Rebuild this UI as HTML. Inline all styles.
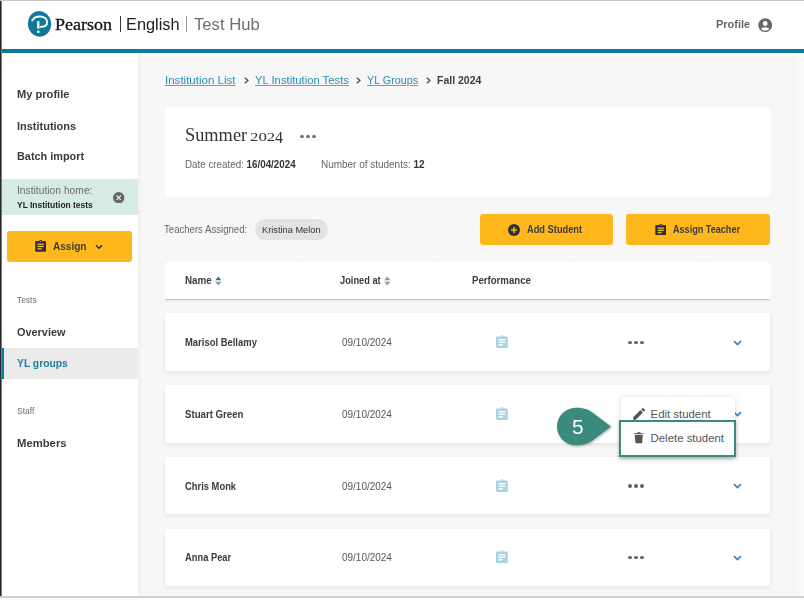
<!DOCTYPE html>
<html><head><meta charset="utf-8"><title>Test Hub</title>
<style>
html,body{margin:0;padding:0;width:804px;height:600px;overflow:hidden;background:#f7f7f7}
body{position:relative;font-family:"Liberation Sans", sans-serif}
.t{position:absolute;white-space:nowrap;font-family:"Liberation Sans", sans-serif}
.r{position:absolute}
</style></head><body>
<div class="r" style="left:0px;top:0px;width:804px;height:600px;background:#f7f7f7"></div>
<div class="r" style="left:0px;top:0px;width:804px;height:49px;background:#fff"></div>
<div class="r" style="left:0px;top:49px;width:804px;height:3.5px;background:#0a7b9c"></div>
<div class="r" style="left:0px;top:52.5px;width:804px;height:1.5px;background:#fff"></div>
<div class="r" style="left:0px;top:54px;width:138px;height:546px;background:#fff"></div>
<div class="r" style="left:138px;top:54px;width:5px;height:546px;background:linear-gradient(to right,#efefef,#f7f7f7)"></div>
<div class="r" style="left:796px;top:54px;width:8px;height:546px;background:#f9f9f9"></div>
<svg class="r" style="left:27px;top:11px" width="26" height="27" viewBox="0 0 26 27"><ellipse cx="12.5" cy="12.9" rx="11.6" ry="12.8" fill="#0e7899" transform="rotate(-8 12.5 12.9)"/><path d="M5.2 9.4 C6.8 6.6 9.6 5.5 12.8 5.5 C17.2 5.5 20.1 7.9 20.1 11 C20.1 14 17.6 15.9 13.6 15.9" fill="none" stroke="#fff" stroke-width="1.9" stroke-linecap="round"/><path d="M11.3 10.2 V17.6" stroke="#fff" stroke-width="2.3"/><rect x="10.1" y="19.6" width="2.4" height="2.3" rx="0.6" fill="#fff"/></svg>
<div class="t" style="left:54.91px;top:16.00px;font-size:17.5px;line-height:17.5px;color:#111;font-weight:400;font-family:'Liberation Serif', serif;transform:scaleX(1.0297);transform-origin:0 0;-webkit-text-stroke:0.3px #111;">Pearson</div>
<div class="r" style="left:119.7px;top:16.3px;width:1.2000000000000028px;height:15.3px;background:#3a3a3a"></div>
<div class="t" style="left:126.06px;top:16.00px;font-size:17.0px;line-height:17.0px;color:#222;font-weight:400;transform:scaleX(0.9620);transform-origin:0 0;">English</div>
<div class="r" style="left:185.8px;top:16.3px;width:1.1999999999999886px;height:15.3px;background:#9a9a9a"></div>
<div class="t" style="left:194.18px;top:16.00px;font-size:17.0px;line-height:17.0px;color:#6e6e6e;font-weight:400;transform:scaleX(0.9786);transform-origin:0 0;">Test Hub</div>
<div class="t" style="left:716.04px;top:19.00px;font-size:11.4px;line-height:11.4px;color:#666;font-weight:700;transform:scaleX(0.9607);transform-origin:0 0;">Profile</div>
<svg class="r" style="left:756.6px;top:16.6px" width="16.4" height="16.4" viewBox="0 0 24 24"><path fill="#666" d="M12 2C6.48 2 2 6.48 2 12s4.48 10 10 10 10-4.48 10-10S17.52 2 12 2zm0 4c1.93 0 3.5 1.57 3.5 3.5S13.93 13 12 13s-3.5-1.570-3.5-3.5S10.07 6 12 6zm0 14c-2.03 0-4.43-.82-6.14-2.88C7.55 15.8 9.680 15 12 15s4.45.8 6.14 2.12C16.43 19.18 14.03 20 12 20z"/></svg>
<div class="t" style="left:16.94px;top:88.00px;font-size:11.6px;line-height:11.6px;color:#3b3b3b;font-weight:700;transform:scaleX(0.9577);transform-origin:0 0;">My profile</div>
<div class="t" style="left:16.94px;top:120.00px;font-size:11.6px;line-height:11.6px;color:#3b3b3b;font-weight:700;transform:scaleX(0.9454);transform-origin:0 0;">Institutions</div>
<div class="t" style="left:16.94px;top:150.00px;font-size:11.6px;line-height:11.6px;color:#3b3b3b;font-weight:700;transform:scaleX(0.9375);transform-origin:0 0;">Batch import</div>
<div class="r" style="left:2px;top:179px;width:136px;height:36px;background:#d6ebe6"></div>
<div class="t" style="left:16.56px;top:186.00px;font-size:10.2px;line-height:10.2px;color:#6b6b6b;font-weight:400;transform:scaleX(1.0098);transform-origin:0 0;">Institution home:</div>
<div class="t" style="left:16.91px;top:201.00px;font-size:8.6px;line-height:8.6px;color:#222;font-weight:700;transform:scaleX(0.9814);transform-origin:0 0;">YL Institution tests</div>
<svg class="r" style="left:113.2px;top:191.6px" width="11.4" height="11.4" viewBox="0 0 24 24"><circle cx="12" cy="12" r="12" fill="#666"/><path d="M7.5 7.5L16.5 16.5M16.5 7.5L7.5 16.5" stroke="#e8e8e8" stroke-width="2.6"/></svg>
<div class="r" style="left:7.3px;top:231px;width:124.7px;height:30.5px;background:#ffb81c;border-radius:3px"></div>
<svg class="r" style="left:34.8px;top:240.2px" width="11.3" height="11.8" viewBox="0 0 12 13"><path fill="#2f2f3a" d="M1.1 1.2H4.3C4.5 0.5 5.2 0 6 0S7.5 0.5 7.7 1.2H10.9C11.5 1.2 12 1.7 12 2.3V11.9C12 12.5 11.5 13 10.9 13H1.1C0.5 13 0 12.5 0 11.9V2.3C0 1.7 0.5 1.2 1.1 1.2Z"/><rect x="2.5" y="3.9" width="7" height="1.4" fill="#ffb81c"/><rect x="2.5" y="6.4" width="7" height="1.4" fill="#ffb81c"/><rect x="2.5" y="9.0" width="4.6" height="1.4" fill="#ffb81c"/><circle cx="6" cy="1.4" r="0.65" fill="#ffb81c"/></svg>
<div class="t" style="left:53.10px;top:240.00px;font-size:11.6px;line-height:11.6px;color:#3b3b3b;font-weight:700;transform:scaleX(0.8667);transform-origin:0 0;">Assign</div>
<svg class="r" style="left:95px;top:243.5px" width="8" height="6" viewBox="0 0 8 6"><path d="M1 1.2L4 4.2L7 1.2" fill="none" stroke="#333" stroke-width="1.6"/></svg>
<div class="t" style="left:16.98px;top:296.00px;font-size:8.6px;line-height:8.6px;color:#6b6b6b;font-weight:400;transform:scaleX(0.9778);transform-origin:0 0;">Tests</div>
<div class="t" style="left:16.87px;top:326.00px;font-size:11.6px;line-height:11.6px;color:#3b3b3b;font-weight:700;transform:scaleX(0.9397);transform-origin:0 0;">Overview</div>
<div class="r" style="left:2px;top:348px;width:136px;height:31px;background:#ebebeb"></div>
<div class="r" style="left:2px;top:348px;width:2px;height:31px;background:#0a7b9c"></div>
<div class="t" style="left:16.87px;top:357.00px;font-size:11.6px;line-height:11.6px;color:#237d9e;font-weight:700;transform:scaleX(0.8902);transform-origin:0 0;">YL groups</div>
<div class="t" style="left:16.73px;top:407.00px;font-size:8.6px;line-height:8.6px;color:#6b6b6b;font-weight:400;transform:scaleX(0.9944);transform-origin:0 0;">Staff</div>
<div class="t" style="left:16.64px;top:437.00px;font-size:11.6px;line-height:11.6px;color:#3b3b3b;font-weight:700;transform:scaleX(0.9735);transform-origin:0 0;">Members</div>
<div class="t" style="left:165.39px;top:74.00px;font-size:11.6px;line-height:11.6px;color:#2b8db3;font-weight:400;transform:scaleX(0.9945);transform-origin:0 0;text-decoration:underline;text-underline-offset:0.5px;text-decoration-color:#5aa8c6;">Institution List</div>
<svg class="r" style="left:243.9px;top:76.5px" width="5" height="7" viewBox="0 0 5 7"><path d="M0.9 0.7L3.9 3.5L0.9 6.3" fill="none" stroke="#505050" stroke-width="1.3"/></svg>
<div class="t" style="left:255.00px;top:74.00px;font-size:11.6px;line-height:11.6px;color:#2b8db3;font-weight:400;transform:scaleX(0.9715);transform-origin:0 0;text-decoration:underline;text-underline-offset:0.5px;text-decoration-color:#5aa8c6;">YL Institution Tests</div>
<svg class="r" style="left:356.4px;top:76.5px" width="5" height="7" viewBox="0 0 5 7"><path d="M0.9 0.7L3.9 3.5L0.9 6.3" fill="none" stroke="#505050" stroke-width="1.3"/></svg>
<div class="t" style="left:367.00px;top:74.00px;font-size:11.6px;line-height:11.6px;color:#2b8db3;font-weight:400;transform:scaleX(0.9316);transform-origin:0 0;text-decoration:underline;text-underline-offset:0.5px;text-decoration-color:#5aa8c6;">YL Groups</div>
<svg class="r" style="left:425.7px;top:76.5px" width="5" height="7" viewBox="0 0 5 7"><path d="M0.9 0.7L3.9 3.5L0.9 6.3" fill="none" stroke="#505050" stroke-width="1.3"/></svg>
<div class="t" style="left:436.54px;top:74.00px;font-size:11.6px;line-height:11.6px;color:#3b3b3b;font-weight:700;transform:scaleX(0.9059);transform-origin:0 0;">Fall 2024</div>
<div class="r" style="left:165px;top:107px;width:605px;height:90px;background:#fff;border-radius:3px"></div>
<div class="t" style="left:184.88px;top:126.00px;font-size:18.2px;line-height:18.2px;color:#333;font-weight:400;font-family:'Liberation Serif', serif;transform:scaleX(1.0080);transform-origin:0 0;">Summer</div>
<div class="t" style="left:250.27px;top:130.00px;font-size:13.4px;line-height:13.4px;color:#333;font-weight:400;font-family:'Liberation Serif', serif;transform:scaleX(1.2589);transform-origin:0 0;">202</div>
<div class="t" style="left:275.12px;top:130.00px;font-size:16.5px;line-height:16.5px;color:#333;font-weight:400;font-family:'Liberation Serif', serif;transform:scaleX(0.9649);transform-origin:0 0;">4</div>
<div class="r" style="left:300.1px;top:134.5px;width:3.5px;height:3.5px;background:#727272;border-radius:50%"></div>
<div class="r" style="left:306.15000000000003px;top:134.5px;width:3.5px;height:3.5px;background:#727272;border-radius:50%"></div>
<div class="r" style="left:312.20000000000005px;top:134.5px;width:3.5px;height:3.5px;background:#727272;border-radius:50%"></div>
<div class="t" style="left:185.12px;top:160.00px;font-size:10.0px;line-height:10.0px;color:#666;font-weight:400;transform:scaleX(0.9803);transform-origin:0 0;">Date created: <b style="color:#333">16/04/2024</b></div>
<div class="t" style="left:321.32px;top:160.00px;font-size:10.0px;line-height:10.0px;color:#666;font-weight:400;transform:scaleX(0.9959);transform-origin:0 0;">Number of students: <b style="color:#333">12</b></div>
<div class="t" style="left:164.44px;top:225.00px;font-size:10.4px;line-height:10.4px;color:#666;font-weight:400;transform:scaleX(0.9229);transform-origin:0 0;">Teachers Assigned:</div>
<div class="r" style="left:254.5px;top:219.4px;width:73.5px;height:20.799999999999983px;background:#e3e3e3;border-radius:11px"></div>
<div class="t" style="left:261.77px;top:225.00px;font-size:9.6px;line-height:9.6px;color:#333;font-weight:400;transform:scaleX(0.9642);transform-origin:0 0;">Kristina Melon</div>
<div class="r" style="left:480px;top:214.2px;width:132.70000000000005px;height:30.600000000000023px;background:#ffb81c;border-radius:3px"></div>
<svg class="r" style="left:508.2px;top:223.7px" width="12" height="12" viewBox="0 0 12 12"><circle cx="6" cy="6" r="6" fill="#2f2f3a"/><path d="M6 3V9M3 6H9" stroke="#ffb81c" stroke-width="1.5"/></svg>
<div class="t" style="left:527.25px;top:225.00px;font-size:10.2px;line-height:10.2px;color:#3b3b3b;font-weight:700;transform:scaleX(0.9104);transform-origin:0 0;">Add Student</div>
<div class="r" style="left:626px;top:214.2px;width:144px;height:30.600000000000023px;background:#ffb81c;border-radius:3px"></div>
<svg class="r" style="left:654.8px;top:223.5px" width="11.4" height="11.7" viewBox="0 0 12 13"><path fill="#2f2f3a" d="M1.1 1.2H4.3C4.5 0.5 5.2 0 6 0S7.5 0.5 7.7 1.2H10.9C11.5 1.2 12 1.7 12 2.3V11.9C12 12.5 11.5 13 10.9 13H1.1C0.5 13 0 12.5 0 11.9V2.3C0 1.7 0.5 1.2 1.1 1.2Z"/><rect x="2.5" y="3.9" width="7" height="1.4" fill="#ffb81c"/><rect x="2.5" y="6.4" width="7" height="1.4" fill="#ffb81c"/><rect x="2.5" y="9.0" width="4.6" height="1.4" fill="#ffb81c"/><circle cx="6" cy="1.4" r="0.65" fill="#ffb81c"/></svg>
<div class="t" style="left:672.85px;top:225.00px;font-size:10.2px;line-height:10.2px;color:#3b3b3b;font-weight:700;transform:scaleX(0.8921);transform-origin:0 0;">Assign Teacher</div>
<div class="r" style="left:165px;top:262px;width:135px;height:38.30000000000001px;background:#fff;border-radius:3px 3px 0 0"></div>
<div class="r" style="left:300px;top:262px;width:134.5px;height:38.30000000000001px;background:#fff;border-radius:3px 3px 0 0"></div>
<div class="r" style="left:434.5px;top:262px;width:134.5px;height:38.30000000000001px;background:#fff;border-radius:3px 3px 0 0"></div>
<div class="r" style="left:569px;top:262px;width:135px;height:38.30000000000001px;background:#fff;border-radius:3px 3px 0 0"></div>
<div class="r" style="left:704px;top:262px;width:66px;height:38.30000000000001px;background:#fff;border-radius:3px 3px 0 0"></div>
<div class="r" style="left:165px;top:299px;width:605px;height:1.3999999999999773px;background:#c6c6c6"></div>
<div class="r" style="left:165px;top:300.4px;width:605px;height:2.6000000000000227px;background:linear-gradient(#ececee,#f6f6f7)"></div>
<div class="t" style="left:184.52px;top:276.00px;font-size:10.0px;line-height:10.0px;color:#3b3b3b;font-weight:700;transform:scaleX(0.9796);transform-origin:0 0;">Name</div>
<svg class="r" style="left:214.6px;top:275.6px" width="6.6" height="10" viewBox="0 0 6.6 10"><path d="M0.2 4.2L3.3 0.5L6.4 4.2Z" fill="#1f7c9c"/><path d="M0.2 5.8L3.3 9.5L6.4 5.8Z" fill="#9a9a9a"/></svg>
<div class="t" style="left:340.08px;top:276.00px;font-size:10.0px;line-height:10.0px;color:#3b3b3b;font-weight:700;transform:scaleX(0.9261);transform-origin:0 0;">Joined at</div>
<svg class="r" style="left:383.6px;top:275.6px" width="6.6" height="10" viewBox="0 0 6.6 10"><path d="M0.2 4.2L3.3 0.5L6.4 4.2Z" fill="#9a9a9a"/><path d="M0.2 5.8L3.3 9.5L6.4 5.8Z" fill="#9a9a9a"/></svg>
<div class="t" style="left:472.12px;top:276.00px;font-size:10.0px;line-height:10.0px;color:#3b3b3b;font-weight:700;transform:scaleX(0.9628);transform-origin:0 0;">Performance</div>
<div class="r" style="left:165px;top:313.3px;width:605px;height:57.80000000000001px;background:#fff;border-radius:3px;box-shadow:0 2px 5px rgba(20,20,60,0.08)"></div>
<div class="t" style="left:184.52px;top:338.00px;font-size:10.0px;line-height:10.0px;color:#3b3b3b;font-weight:700;transform:scaleX(0.9441);transform-origin:0 0;">Marisol Bellamy</div>
<div class="t" style="left:341.59px;top:338.00px;font-size:10.0px;line-height:10.0px;color:#555;font-weight:400;transform:scaleX(0.9961);transform-origin:0 0;">09/10/2024</div>
<svg class="r" style="left:495.9px;top:335.1px" width="11.8" height="13.2" viewBox="0 0 12 13"><path fill="#a9d3e3" d="M1.1 1.2H4.3C4.5 0.5 5.2 0 6 0S7.5 0.5 7.7 1.2H10.9C11.5 1.2 12 1.7 12 2.3V11.9C12 12.5 11.5 13 10.9 13H1.1C0.5 13 0 12.5 0 11.9V2.3C0 1.7 0.5 1.2 1.1 1.2Z"/><rect x="2.5" y="3.9" width="7" height="1.4" fill="#fff"/><rect x="2.5" y="6.4" width="7" height="1.4" fill="#fff"/><rect x="2.5" y="9.0" width="4.6" height="1.4" fill="#fff"/><circle cx="6" cy="1.4" r="0.65" fill="#fff"/></svg>
<div class="r" style="left:628.1px;top:340.5px;width:3.7999999999999545px;height:3.8000000000000114px;background:#646464;border-radius:50%"></div>
<div class="r" style="left:634.2px;top:340.5px;width:3.7999999999999545px;height:3.8000000000000114px;background:#646464;border-radius:50%"></div>
<div class="r" style="left:640.3000000000001px;top:340.5px;width:3.7999999999999545px;height:3.8000000000000114px;background:#646464;border-radius:50%"></div>
<svg class="r" style="left:732.5px;top:339.6px" width="9" height="6" viewBox="0 0 9 6"><path d="M1 1.2L4.5 4.6L8 1.2" fill="none" stroke="#2b8db3" stroke-width="1.7"/></svg>
<div class="r" style="left:165px;top:385.0px;width:605px;height:57.80000000000001px;background:#fff;border-radius:3px;box-shadow:0 2px 5px rgba(20,20,60,0.08)"></div>
<div class="t" style="left:184.70px;top:410.00px;font-size:10.0px;line-height:10.0px;color:#3b3b3b;font-weight:700;transform:scaleX(0.9638);transform-origin:0 0;">Stuart Green</div>
<div class="t" style="left:341.59px;top:410.00px;font-size:10.0px;line-height:10.0px;color:#555;font-weight:400;transform:scaleX(0.9961);transform-origin:0 0;">09/10/2024</div>
<svg class="r" style="left:495.9px;top:406.8px" width="11.8" height="13.2" viewBox="0 0 12 13"><path fill="#a9d3e3" d="M1.1 1.2H4.3C4.5 0.5 5.2 0 6 0S7.5 0.5 7.7 1.2H10.9C11.5 1.2 12 1.7 12 2.3V11.9C12 12.5 11.5 13 10.9 13H1.1C0.5 13 0 12.5 0 11.9V2.3C0 1.7 0.5 1.2 1.1 1.2Z"/><rect x="2.5" y="3.9" width="7" height="1.4" fill="#fff"/><rect x="2.5" y="6.4" width="7" height="1.4" fill="#fff"/><rect x="2.5" y="9.0" width="4.6" height="1.4" fill="#fff"/><circle cx="6" cy="1.4" r="0.65" fill="#fff"/></svg>
<svg class="r" style="left:732.5px;top:411.3px" width="9" height="6" viewBox="0 0 9 6"><path d="M1 1.2L4.5 4.6L8 1.2" fill="none" stroke="#2b8db3" stroke-width="1.7"/></svg>
<div class="r" style="left:165px;top:456.7px;width:605px;height:57.80000000000001px;background:#fff;border-radius:3px;box-shadow:0 2px 5px rgba(20,20,60,0.08)"></div>
<div class="t" style="left:184.72px;top:482.00px;font-size:10.0px;line-height:10.0px;color:#3b3b3b;font-weight:700;transform:scaleX(0.9381);transform-origin:0 0;">Chris Monk</div>
<div class="t" style="left:341.59px;top:482.00px;font-size:10.0px;line-height:10.0px;color:#555;font-weight:400;transform:scaleX(0.9961);transform-origin:0 0;">09/10/2024</div>
<svg class="r" style="left:495.9px;top:478.5px" width="11.8" height="13.2" viewBox="0 0 12 13"><path fill="#a9d3e3" d="M1.1 1.2H4.3C4.5 0.5 5.2 0 6 0S7.5 0.5 7.7 1.2H10.9C11.5 1.2 12 1.7 12 2.3V11.9C12 12.5 11.5 13 10.9 13H1.1C0.5 13 0 12.5 0 11.9V2.3C0 1.7 0.5 1.2 1.1 1.2Z"/><rect x="2.5" y="3.9" width="7" height="1.4" fill="#fff"/><rect x="2.5" y="6.4" width="7" height="1.4" fill="#fff"/><rect x="2.5" y="9.0" width="4.6" height="1.4" fill="#fff"/><circle cx="6" cy="1.4" r="0.65" fill="#fff"/></svg>
<div class="r" style="left:628.1px;top:483.9px;width:3.7999999999999545px;height:3.8000000000000114px;background:#646464;border-radius:50%"></div>
<div class="r" style="left:634.2px;top:483.9px;width:3.7999999999999545px;height:3.8000000000000114px;background:#646464;border-radius:50%"></div>
<div class="r" style="left:640.3000000000001px;top:483.9px;width:3.7999999999999545px;height:3.8000000000000114px;background:#646464;border-radius:50%"></div>
<svg class="r" style="left:732.5px;top:483.0px" width="9" height="6" viewBox="0 0 9 6"><path d="M1 1.2L4.5 4.6L8 1.2" fill="none" stroke="#2b8db3" stroke-width="1.7"/></svg>
<div class="r" style="left:165px;top:528.5px;width:605px;height:57.799999999999955px;background:#fff;border-radius:3px;box-shadow:0 2px 5px rgba(20,20,60,0.08)"></div>
<div class="t" style="left:184.75px;top:553.00px;font-size:10.0px;line-height:10.0px;color:#3b3b3b;font-weight:700;transform:scaleX(0.9330);transform-origin:0 0;">Anna Pear</div>
<div class="t" style="left:341.59px;top:553.00px;font-size:10.0px;line-height:10.0px;color:#555;font-weight:400;transform:scaleX(0.9961);transform-origin:0 0;">09/10/2024</div>
<svg class="r" style="left:495.9px;top:550.3px" width="11.8" height="13.2" viewBox="0 0 12 13"><path fill="#a9d3e3" d="M1.1 1.2H4.3C4.5 0.5 5.2 0 6 0S7.5 0.5 7.7 1.2H10.9C11.5 1.2 12 1.7 12 2.3V11.9C12 12.5 11.5 13 10.9 13H1.1C0.5 13 0 12.5 0 11.9V2.3C0 1.7 0.5 1.2 1.1 1.2Z"/><rect x="2.5" y="3.9" width="7" height="1.4" fill="#fff"/><rect x="2.5" y="6.4" width="7" height="1.4" fill="#fff"/><rect x="2.5" y="9.0" width="4.6" height="1.4" fill="#fff"/><circle cx="6" cy="1.4" r="0.65" fill="#fff"/></svg>
<div class="r" style="left:628.1px;top:555.7px;width:3.7999999999999545px;height:3.7999999999999545px;background:#646464;border-radius:50%"></div>
<div class="r" style="left:634.2px;top:555.7px;width:3.7999999999999545px;height:3.7999999999999545px;background:#646464;border-radius:50%"></div>
<div class="r" style="left:640.3000000000001px;top:555.7px;width:3.7999999999999545px;height:3.7999999999999545px;background:#646464;border-radius:50%"></div>
<svg class="r" style="left:732.5px;top:554.8px" width="9" height="6" viewBox="0 0 9 6"><path d="M1 1.2L4.5 4.6L8 1.2" fill="none" stroke="#2b8db3" stroke-width="1.7"/></svg>
<div class="r" style="left:620.8px;top:397.3px;width:114.20000000000005px;height:59.69999999999999px;background:#fff;border-radius:3px;box-shadow:0 1px 6px rgba(0,0,0,0.15)"></div>
<svg class="r" style="left:630.5px;top:406.2px" width="16.3" height="15.8" viewBox="0 0 24 24"><path fill="#555" d="M3 17.25V21h3.75L17.81 9.94l-3.75-3.75L3 17.25zM20.71 7.04c.39-.39.39-1.02 0-1.41l-2.34-2.34c-.39-.39-1.02-.39-1.41 0l-1.83 1.83 3.75 3.75 1.83-1.83z"/></svg>
<div class="t" style="left:650.55px;top:409.00px;font-size:11.4px;line-height:11.4px;color:#555;font-weight:400;">Edit student</div>
<div class="r" style="left:619.2px;top:420.3px;width:116.5px;height:36.89999999999998px;border:2.7px solid #3a8a7e;box-sizing:border-box;background:#fff;box-shadow:0 2px 3px rgba(0,0,0,0.25)"></div>
<svg class="r" style="left:634.4px;top:432.3px" width="9.6" height="11.3" viewBox="0 0 10 12"><path fill="#555" d="M0 1.2H3L3.6 0.3H6.4L7 1.2H10V2.4H0Z"/><path fill="#555" d="M0.8 3.2H9.2L8.6 11.2C8.55 11.7 8.2 12 7.7 12H2.3C1.8 12 1.45 11.7 1.4 11.2Z"/></svg>
<div class="t" style="left:650.55px;top:433.00px;font-size:11.4px;line-height:11.4px;color:#555;font-weight:400;">Delete student</div>
<svg class="r" style="left:555px;top:405px" width="60" height="44" viewBox="0 0 60 44"><path d="M56 21.4 L38 8 C34 4.5 28 2.8 20.7 2.8 C10.4 2.8 2 11.2 2 21.5 C2 31.8 10.4 40.3 20.7 40.3 C28 40.3 34 38.3 38 35 Z" fill="#3a8a7e" style="filter:drop-shadow(1px 1.5px 1px rgba(0,0,0,0.3))"/></svg>
<div class="t" style="left:572.49px;top:417.00px;font-size:20.5px;line-height:20.5px;color:#fff;font-weight:400;transform:scaleX(1.0208);transform-origin:0 0;">5</div>
<div class="r" style="left:0px;top:0px;width:804px;height:1px;background:#c8c8c8"></div>
<div class="r" style="left:0px;top:1px;width:1px;height:595px;background:#2a2a2a"></div>
<div class="r" style="left:1px;top:1px;width:1px;height:595px;background:#7a7a7a"></div>
<div class="r" style="left:0px;top:596px;width:804px;height:2px;background:#cfcfcf"></div>
<div class="r" style="left:0px;top:598px;width:804px;height:2px;background:#fdfdfd"></div>
</body></html>
